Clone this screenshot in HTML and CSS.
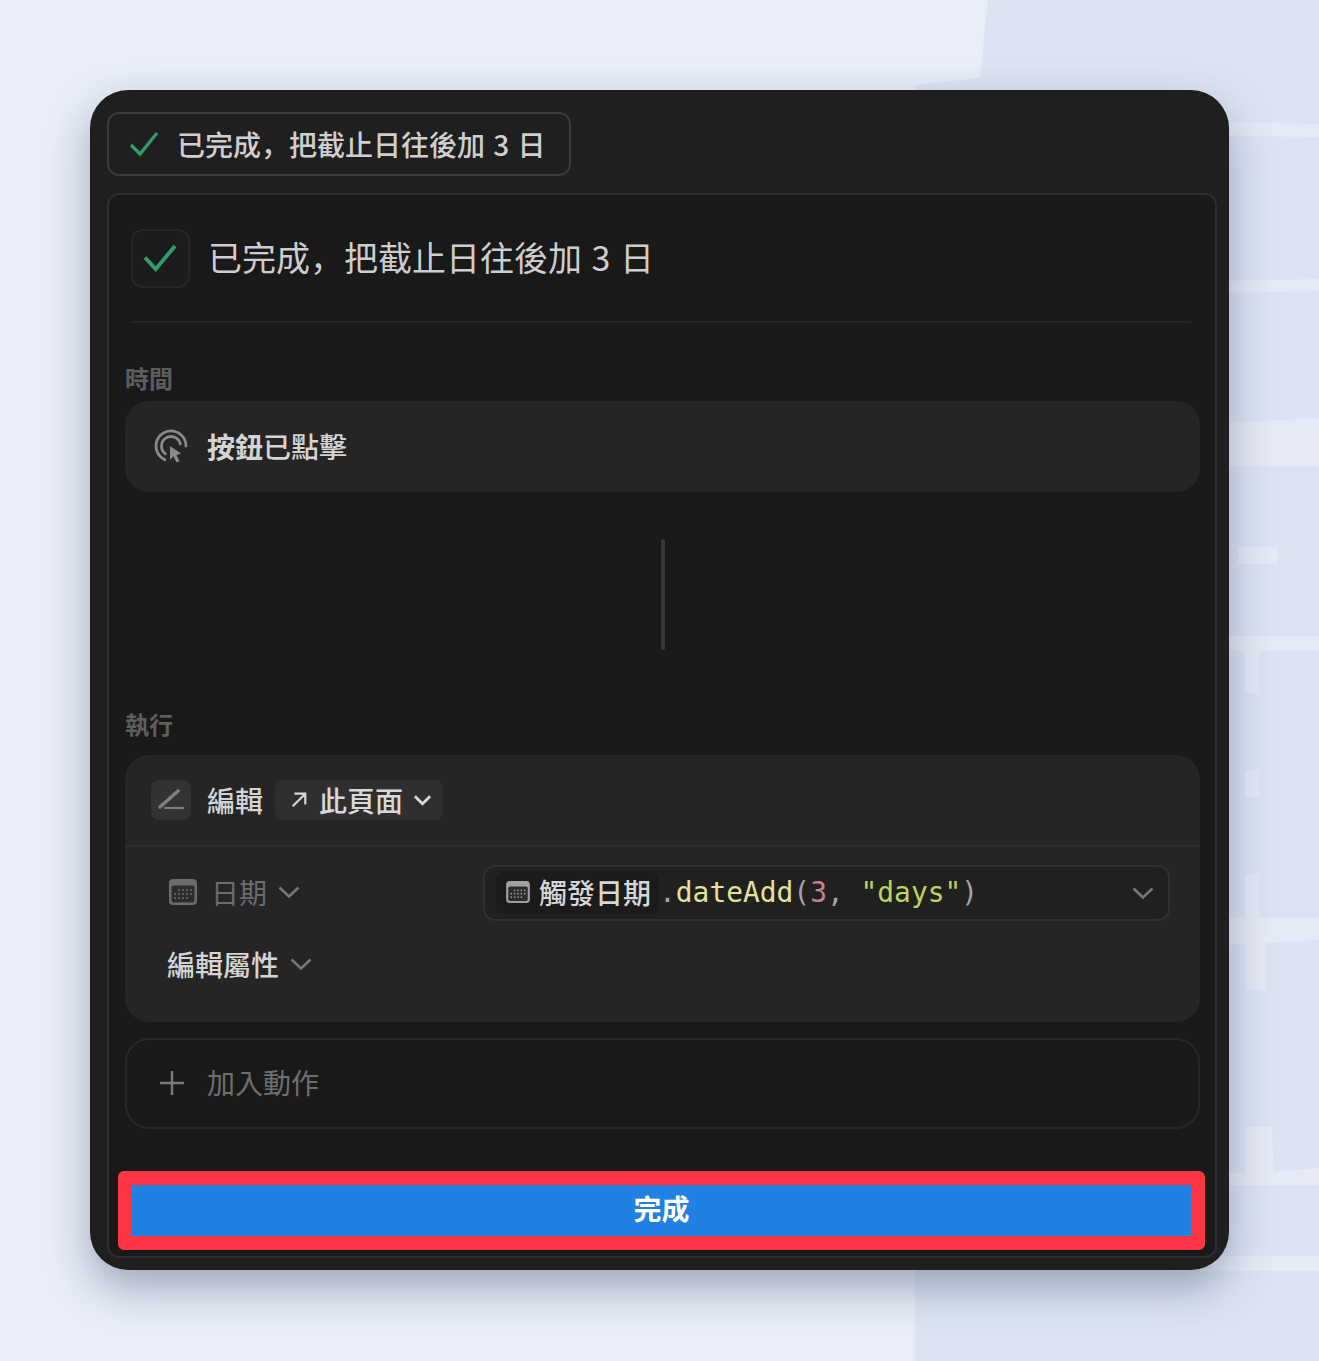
FILE: index.html
```html
<!DOCTYPE html>
<html lang="zh-Hant">
<head>
  <meta charset="UTF-8" />
  <meta name="viewport" content="width=device-width, initial-scale=1.0" />
  <title>已完成，把截止日往後加 3 日</title>
  <link rel="stylesheet" href="styles.css">
</head>
<body>
  <!-- blurred page behind the window -->
  <svg class="backdrop" viewBox="0 0 1319 1361" aria-hidden="true">
    <polygon class="light" points="0,0 988,0 980,78 915,85 915,1361 0,1361" />
    <polygon class="strip" points="1229,122 1319,124 1319,137 1229,136" />
    <polygon class="strip" points="1229,281 1319,279 1319,291 1229,293" />
    <polygon class="strip" points="1229,423 1319,418 1319,466 1229,466" />
    <rect class="strip" x="1238" y="547" width="39" height="17" />
    <polygon class="strip" points="1229,636 1319,636 1319,651 1259,651 1259,695 1245,692 1245,651 1229,649" />
    <polygon class="strip" points="1245,771 1259,769 1259,796 1245,798" />
    <polygon class="strip" points="1245,875 1259,873 1259,918 1319,918 1319,940 1266,943 1266,990 1246,990 1246,943 1229,945 1229,918 1245,918" />
    <polygon class="strip" points="1246,1127 1272,1127 1274,1172 1319,1168 1319,1185 1229,1185 1229,1173 1246,1173" />
    <rect class="strip" x="1200" y="1256" width="119" height="15" />
  </svg>

  <main class="window">
    <div class="tab">
      <svg class="tab-check" viewBox="0 0 32 32"><path d="M3 17l9 9L29 5" /></svg>
      <span>已完成<span class="comma" lang="ja">，</span>把截止日往後加 3 日</span>
    </div>

    <section class="panel">
      <header class="panel-head">
        <div class="check-box">
          <svg viewBox="0 0 36 32"><path d="M2 15l11 12L33 3" /></svg>
        </div>
        <h1>已完成<span class="comma" lang="ja">，</span>把截止日往後加 3 日</h1>
      </header>

      <div class="body">
        <h2 class="label">時間</h2>
        <div class="card trigger">
          <svg class="click-icon" viewBox="0 0 34 34">
            <path d="M11 30.700A15 15 0 1 1 32 17" />
            <path d="M11.500 24.800A9.500 9.500 0 1 1 26.300 15" />
            <path class="fill" d="M16 17l11 7.500-4.500 1.500 3 6-3 1.500-3-6.300-3.500 3.500z" />
          </svg>
          <span class="trigger-text"><b>按鈕</b>已點擊</span>
        </div>

        <div class="connector"></div>

        <h2 class="label label-run">執行</h2>
        <div class="card action">
          <div class="action-head">
            <div class="edit-box">
              <svg viewBox="0 0 26 26">
                <path d="M7 21h18" />
                <path d="M2 20L20 4" class="thick" />
              </svg>
            </div>
            <span>編輯</span>
            <div class="page-pill">
              <svg class="arrow" viewBox="0 0 20 20"><path d="M3 17L17 3M5 3h12v12" /></svg>
              <span>此頁面</span>
              <svg class="chevron bright" viewBox="0 0 20 12"><path d="M2 2l8 8 8-8" /></svg>
            </div>
          </div>

          <div class="action-body">
            <div class="prop-row">
              <div class="prop-name">
                <svg class="cal dim" viewBox="0 0 28 26">
                  <rect x="0" y="0" width="28" height="26" rx="4" />
                  <rect class="cal-inner" x="2.500" y="6.500" width="23" height="17" rx="2" />
                  <g class="cal-dots">
                    <circle cx="10" cy="11" r="1" /><circle cx="14" cy="11" r="1" /><circle cx="18" cy="11" r="1" /><circle cx="22" cy="11" r="1" />
                    <circle cx="6" cy="15" r="1" /><circle cx="10" cy="15" r="1" /><circle cx="14" cy="15" r="1" /><circle cx="18" cy="15" r="1" /><circle cx="22" cy="15" r="1" />
                    <circle cx="6" cy="19" r="1" /><circle cx="10" cy="19" r="1" /><circle cx="14" cy="19" r="1" /><circle cx="18" cy="19" r="1" />
                  </g>
                </svg>
                <span>日期</span>
                <svg class="chevron" viewBox="0 0 22 12"><path d="M1.500 1.500L11 10.500l9.500-9" /></svg>
              </div>
              <div class="formula">
                <span class="token">
                  <svg class="cal" viewBox="0 0 28 26">
                    <rect x="0" y="0" width="28" height="26" rx="4" />
                    <rect class="cal-inner" x="2.500" y="6.500" width="23" height="17" rx="2" />
                    <g class="cal-dots">
                      <circle cx="10" cy="11" r="1" /><circle cx="14" cy="11" r="1" /><circle cx="18" cy="11" r="1" /><circle cx="22" cy="11" r="1" />
                      <circle cx="6" cy="15" r="1" /><circle cx="10" cy="15" r="1" /><circle cx="14" cy="15" r="1" /><circle cx="18" cy="15" r="1" /><circle cx="22" cy="15" r="1" />
                      <circle cx="6" cy="19" r="1" /><circle cx="10" cy="19" r="1" /><circle cx="14" cy="19" r="1" /><circle cx="18" cy="19" r="1" />
                    </g>
                  </svg>
                  <span>觸發日期</span>
                </span>
                <code class="code"><span class="c-dot">.</span><span class="c-fn">dateAdd</span><span class="c-punc">(</span><span class="c-num">3</span><span class="c-punc">, </span><span class="c-str">"days"</span><span class="c-punc">)</span></code>
                <svg class="chevron formula-chevron" viewBox="0 0 22 12"><path d="M1.500 1.500L11 10.500l9.500-9" /></svg>
              </div>
            </div>
            <div class="edit-props">
              <span>編輯屬性</span>
              <svg class="chevron" viewBox="0 0 22 12"><path d="M1.500 1.500L11 10.500l9.500-9" /></svg>
            </div>
          </div>
        </div>

        <div class="add-action">
          <svg viewBox="0 0 24 24"><path d="M12 0v24M0 12h24" /></svg>
          <span>加入動作</span>
        </div>
      </div>

      <div class="done-wrap">
        <button class="done">完成</button>
      </div>
    </section>
  </main>
</body>
</html>
```

FILE: styles.css
```css
* {
  box-sizing: border-box;
}

body {
  margin: 0;
  width: 1319px;
  height: 1361px;
  padding: 90px 90px 0;
  overflow: hidden;
  position: relative;
  background: #dce4f3;
  color: #d4d4d4;
  font-family: "Noto Sans CJK TC", "Noto Sans", sans-serif;
}

.backdrop {
  position: absolute;
  left: 0;
  top: 0;
  width: 1319px;
  height: 1361px;
}

.backdrop .light {
  fill: #e8edf8;
}

.backdrop .strip {
  fill: #e6eaf6;
}

.window {
  position: relative;
  width: 1139px;
  height: 1180px;
  padding: 22px 12px 12px 17px;
  display: flex;
  flex-direction: column;
  align-items: flex-start;
  background: #1f1f1f;
  border-radius: 38px;
  box-shadow: 0 18px 42px rgba(45, 55, 85, 0.38);
}

.comma {
  font-family: "Noto Sans CJK JP", sans-serif;
}

.tab {
  width: 464px;
  height: 64px;
  margin-bottom: 17px;
  padding-left: 19px;
  display: flex;
  align-items: center;
  gap: 17px;
  flex-shrink: 0;
  border: 2px solid #3b3b3b;
  border-radius: 12px;
  background: #1f1f1f;
  font-size: 28px;
  font-weight: 500;
  line-height: 1;
  word-spacing: 2px;
  color: #cfcfcf;
}

.tab-check {
  width: 32px;
  height: 32px;
  fill: none;
  stroke: #2f9e68;
  stroke-width: 3.200;
}

.panel {
  flex: 1;
  width: 100%;
  display: flex;
  flex-direction: column;
  min-height: 0;
  padding: 0;
  border: 2px solid #2e2e2e;
  border-radius: 12px;
  background: #191919;
}

.panel-head {
  height: 128px;
  margin: 0 24px 0 24px;
  padding: 34px 0 0 0;
  display: flex;
  align-items: flex-start;
  gap: 18px;
  border-bottom: 2px solid #252525;
}

.check-box {
  width: 59px;
  height: 59px;
  margin-left: -2px;
  display: flex;
  align-items: center;
  justify-content: center;
  border: 2px solid #262626;
  border-radius: 12px;
  background: #1b1b1b;
}

.check-box svg {
  width: 37px;
  height: 31px;
  fill: none;
  stroke: #2f9e68;
  stroke-width: 4;
}

.panel-head h1 {
  margin: 0;
  height: 59px;
  padding-bottom: 4px;
  display: flex;
  align-items: center;
  font-size: 34px;
  font-weight: 400;
  word-spacing: 2px;
  color: #cdcdcd;
}

.body {
  flex: 1;
  padding: 0 15px 0 16px;
}

.label {
  margin: 40px 0 8px;
  height: 30px;
  font-size: 24px;
  line-height: 30px;
  font-weight: 700;
  color: #5d5d5d;
}

.card {
  background: #252525;
  border-radius: 24px;
}

.trigger {
  height: 91px;
  padding-left: 29px;
  padding-bottom: 1px;
  display: flex;
  align-items: center;
  gap: 19px;
  font-size: 28px;
  color: #d4d4d4;
}

.trigger-text {
  font-weight: 500;
}

.trigger-text b {
  font-weight: 700;
}

.click-icon {
  width: 34px;
  height: 34px;
  fill: none;
  stroke: #8a8a8a;
  stroke-width: 2.800;
  stroke-linecap: round;
}

.click-icon .fill {
  fill: #8a8a8a;
  stroke: none;
}

.connector {
  width: 4px;
  height: 111px;
  margin: 47px auto 0;
  background: #383838;
  border-radius: 2px;
}

.label-run {
  margin: 59px 0 16px;
}

.action {
  height: 267px;
  display: flex;
  flex-direction: column;
}

.action-head {
  height: 92px;
  padding: 0 6px 0 26px;
  display: flex;
  align-items: center;
  gap: 16px;
  border-bottom: 2px solid #2e2e2e;
  font-size: 28px;
  font-weight: 500;
}

.edit-box {
  width: 40px;
  height: 40px;
  display: flex;
  align-items: center;
  justify-content: center;
  background: #333333;
  border-radius: 8px;
}

.edit-box svg {
  width: 26px;
  height: 26px;
  fill: none;
  stroke: #808080;
  stroke-width: 2;
  stroke-linecap: round;
}

.edit-box .thick {
  stroke-width: 3.500;
}

.page-pill {
  width: 168px;
  height: 40px;
  margin-left: -4px;
  padding-left: 15px;
  display: flex;
  align-items: center;
  gap: 11px;
  background: #2f2f2f;
  border-radius: 8px;
  color: #d8d8d8;
}

.arrow {
  width: 18px;
  height: 18px;
  fill: none;
  stroke: #d8d8d8;
  stroke-width: 2.400;
}

.chevron {
  width: 22px;
  height: 12px;
  fill: none;
  stroke: #777777;
  stroke-width: 2.500;
}

.chevron.bright {
  width: 19px;
  stroke: #d8d8d8;
  stroke-width: 3;
  margin-left: -1px;
}

.action-body {
  flex: 1;
  padding: 18px 30px 0 42px;
}

.prop-row {
  display: flex;
  align-items: center;
  justify-content: space-between;
}

.prop-name {
  padding-bottom: 2px;
  display: flex;
  align-items: center;
  font-size: 28px;
  color: #6c6c6c;
}

.prop-name .cal {
  margin-right: 14px;
}

.prop-name .chevron {
  margin-left: 11px;
}

.cal {
  width: 28px;
  height: 26px;
  fill: #a0a0a0;
  flex-shrink: 0;
}

.cal.dim {
  margin-left: 2px;
  fill: #6c6c6c;
}

.cal-inner {
  fill: #2c2c2c;
}

.cal-dots {
  fill: #a0a0a0;
}

.cal.dim .cal-dots {
  fill: #6c6c6c;
}

.formula {
  width: 687px;
  height: 56px;
  padding-left: 11px;
  display: flex;
  align-items: center;
  border: 2px solid #303030;
  border-radius: 12px;
  background: #202020;
}

.token {
  height: 42px;
  padding: 0 8px 2px;
  display: flex;
  align-items: center;
  gap: 9px;
  flex-shrink: 0;
  width: 163px;
  background: #1b1b1b;
  border-radius: 8px;
  font-size: 28px;
  font-weight: 500;
  color: #d6d6d6;
}

.token .cal {
  width: 24px;
  height: 22px;
  margin-left: 2px;
}

.code {
  margin-bottom: 2px;
  font-family: "DejaVu Sans Mono", "Liberation Mono", monospace;
  font-size: 27.900px;
  white-space: pre;
}

.c-dot,
.c-punc {
  color: #a3a3a3;
}

.c-fn {
  color: #e3e39a;
}

.c-num {
  color: #c4838d;
}

.c-str {
  color: #bcd45f;
}

.formula-chevron {
  margin-left: auto;
  margin-right: 14px;
}

.edit-props {
  margin-top: 23px;
  display: flex;
  align-items: center;
  gap: 11px;
  font-size: 28px;
  font-weight: 500;
}

.add-action {
  height: 91px;
  margin-top: 16px;
  padding-left: 33px;
  padding-bottom: 2px;
  display: flex;
  align-items: center;
  gap: 23px;
  border: 2px solid #272727;
  border-radius: 24px;
  font-size: 28px;
  color: #6e6e6e;
}

.add-action span {
  margin-bottom: 2px;
}

.add-action svg {
  width: 24px;
  height: 24px;
  fill: none;
  stroke: #7a7a7a;
  stroke-width: 2.500;
}

.done-wrap {
  padding: 0 10px 6px 9px;
}

.done {
  display: block;
  width: 100%;
  height: 79px;
  padding: 0 0 6px;
  border: 14px solid #fe3545;
  border-radius: 6px;
  background: #2181e2;
  background-clip: padding-box;
  font-family: inherit;
  font-size: 28px;
  font-weight: 700;
  color: #ffffff;
}
```
